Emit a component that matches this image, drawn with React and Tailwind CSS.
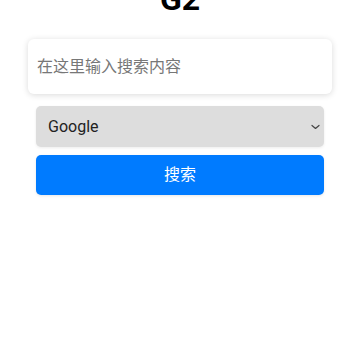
import React from 'react';

function Chevron() {
  return (
    <svg width="9" height="6" viewBox="0 0 9 6" className="absolute right-[4px] top-1/2 -translate-y-1/2 pointer-events-none">
      <path d="M1 1.5l3.5 3 3.5-3" fill="none" stroke="#444" strokeWidth="1.2" strokeLinecap="round" strokeLinejoin="round" />
    </svg>
  );
}

export default function App() {
  return (
    <div className="w-[360px] h-[360px] overflow-hidden bg-white" style={{ fontFamily: 'Roboto, "Noto Sans CJK SC", sans-serif' }}>
      <h1 className="text-[32px] leading-[40px] font-bold text-center text-black -mt-[21px]">G2</h1>
      <div className="mt-[20px] mx-[28px] h-[55px] bg-white rounded-[6px] shadow-[0_1px_6px_rgba(0,0,0,0.15)] flex items-center px-[9px]">
        <input
          className="w-full text-[16px] text-[#333] placeholder:text-[#777] outline-none bg-transparent"
          placeholder="在这里输入搜索内容"
        />
      </div>
      <div className="mx-[36px] mt-[12px] flex flex-col gap-[8px]">
        <div className="relative h-[41px] bg-[#dddddd] rounded-[5px] shadow-[0_1px_3px_rgba(0,0,0,0.08)] flex items-center px-[12px] pr-[20px]">
          <span className="text-[16px] text-[#222]">Google</span>
          <Chevron />
        </div>
        <button className="h-[40px] bg-[#007bff] rounded-[5px] text-white text-[16px] shadow-[0_1px_3px_rgba(0,0,0,0.1)]">搜索</button>
      </div>
    </div>
  );
}
